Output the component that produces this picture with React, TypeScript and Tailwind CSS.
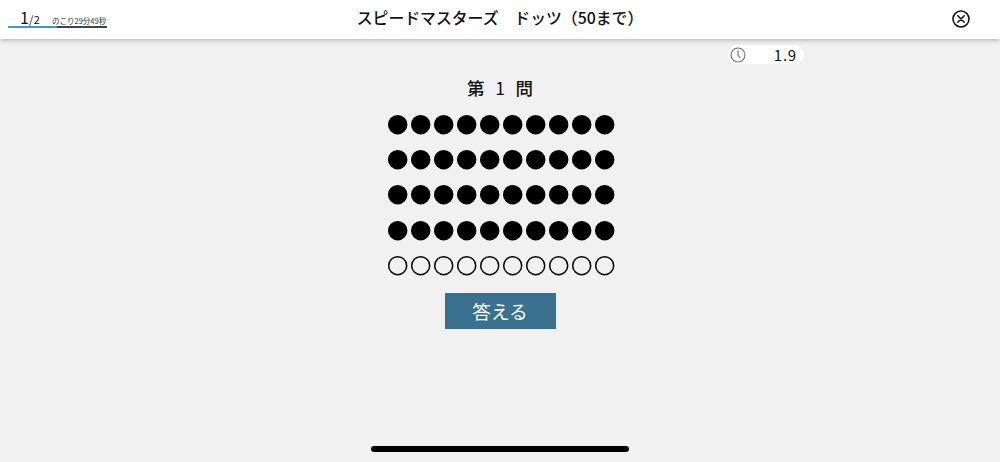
const ROWS = [true, true, true, true, false];
const COLUMNS = Array.from({ length: 10 }, (_, i) => i);

function CloseIcon() {
  return (
    <svg className="size-[18px]" viewBox="0 0 18 18" fill="none" stroke="#161616" strokeWidth="1.6" strokeLinecap="round">
      <circle cx="9" cy="9" r="8" />
      <path d="M5.8 5.8 12.2 12.2M12.2 5.8 5.8 12.2" />
    </svg>
  );
}

function ClockIcon() {
  return (
    <svg className="size-4" viewBox="0 0 16 16" fill="none" stroke="#707070" strokeWidth="1.1" strokeLinecap="round" strokeLinejoin="round">
      <circle cx="8" cy="8" r="7" />
      <path d="M8 3.7V8.2L10 10.7" />
    </svg>
  );
}

function Header() {
  return (
    <header className="grid h-[39px] grid-cols-[1fr_auto_1fr] items-start bg-white shadow-[0_1px_5px_rgba(0,0,0,0.28)]">
      <div className="ml-2 w-[99px] pt-[9px]">
        <div className="flex h-[17px] items-baseline pl-[12px] leading-[17px]">
          <span className="w-[9px] text-[16px]">1</span>
          <span className="w-[23px] text-[11px] tracking-[0.4px]">/2</span>
          <span className="text-[7.5px] whitespace-nowrap text-[#333]">のこり29分49秒</span>
        </div>
        <div className="flex h-[1.5px]">
          <div className="w-[49px] bg-[#4a97bd]" />
          <div className="flex-1 bg-[#444]" />
        </div>
      </div>
      <h1 className="pt-[6px] text-[15.85px] leading-6 font-medium whitespace-nowrap">スピードマスターズ　ドッツ（50まで）</h1>
      <button aria-label="閉じる" className="mt-[10px] mr-[30px] justify-self-end">
        <CloseIcon />
      </button>
    </header>
  );
}

export default function App() {
  return (
    <div className="flex h-[462px] w-[1000px] flex-col overflow-hidden bg-[#f1f1f1] font-['Noto_Sans_CJK_JP',sans-serif] text-[#111]">
      <Header />
      <main className="flex flex-1 flex-col items-center">
        <div className="mt-[6px] mr-[196px] flex h-[19px] w-[76px] items-center justify-between self-end rounded-full bg-white pr-[7px] pl-[2px]">
          <ClockIcon />
          <span className="text-[15px] leading-[19px] tracking-[0.8px]">1.9</span>
        </div>
        <h2 className="mt-[10px] flex h-[27px] w-[66px] items-center justify-between text-[17.5px] leading-[27px] font-medium">
          <span>第</span>
          <span className="font-normal">1</span>
          <span>問</span>
        </h2>
        <div className="mt-[13.6px] ml-[2px] flex flex-col gap-[16px]">
          {ROWS.map((filled, row) => (
            <div key={row} className="flex gap-[3.65px]">
              {COLUMNS.map((column) => (
                <svg key={column} className="size-[19.4px] overflow-visible" viewBox="0 0 19.4 19.4">
                  <circle cx="9.7" cy="9.7" r="9" fill={filled ? "#000" : "none"} stroke="#000" strokeWidth="1.5" />
                </svg>
              ))}
            </div>
          ))}
        </div>
        <button className="mt-[17px] h-[36px] w-[111px] bg-[#3a718f] text-[18.7px] leading-[36px] text-white">答える</button>
        <div className="mt-auto mb-[10px] h-[6px] w-[258px] rounded-full bg-black" />
      </main>
    </div>
  );
}
